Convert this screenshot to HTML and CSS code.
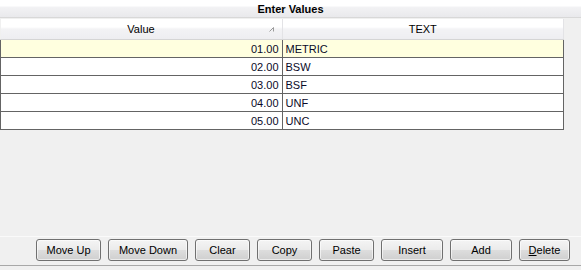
FILE: index.html
```html
<!DOCTYPE html>
<html lang="en">
<head>
    <meta charset="UTF-8">
    <title>Enter Values</title>
    <link rel="stylesheet" href="styles.css">
</head>
<body>
    <div class="window">
        <div class="title">Enter Values</div>

        <div class="grid-area">
            <table class="grid">
                <thead>
                    <tr>
                        <th class="col-value">Value
                            <svg class="sort" width="6" height="5" viewBox="0 0 6 5">
                                <path d="M0.5 4.5 L4.5 0.5 L4.5 4.5" fill="none" stroke="#9a9a9a" stroke-width="1"/>
                            </svg>
                        </th>
                        <th class="col-text">TEXT</th>
                    </tr>
                </thead>
                <tbody>
                    <tr class="selected"><td class="num">01.00</td><td>METRIC</td></tr>
                    <tr><td class="num">02.00</td><td>BSW</td></tr>
                    <tr><td class="num">03.00</td><td>BSF</td></tr>
                    <tr><td class="num">04.00</td><td>UNF</td></tr>
                    <tr><td class="num">05.00</td><td>UNC</td></tr>
                </tbody>
            </table>
        </div>

        <div class="buttons">
            <button class="btn btn-move-up">Move Up</button>
            <button class="btn btn-move-down">Move Down</button>
            <button class="btn btn-clear">Clear</button>
            <button class="btn btn-copy">Copy</button>
            <button class="btn btn-paste">Paste</button>
            <button class="btn btn-insert">Insert</button>
            <button class="btn btn-add">Add</button>
            <button class="btn btn-delete"><u>D</u>elete</button>
        </div>
    </div>
</body>
</html>
```

FILE: styles.css
```css
body {
    margin: 0;
    padding: 0;
    background-color: #f0f0f0;
    font-family: "Liberation Sans", Arial, sans-serif;
    font-size: 11px;
    color: #000;
}
.window {
    width: 581px;
    height: 270px;
    display: flex;
    flex-direction: column;
}
.title {
    height: 17px;
    line-height: 18px;
    text-align: center;
    font-weight: bold;
    border-bottom: 1px solid #d8d8d8;
    background: linear-gradient(#ffffff 0%, #ffffff 35%, #f2f2f4 42%, #e9e9ec 100%);
}
.grid-area {
    flex: 1;
    padding-top: 1px;
}
.grid {
    width: 564px;
    border-collapse: collapse;
    table-layout: fixed;
}
.grid th {
    height: 20px;
    padding: 0;
    font-weight: normal;
    text-align: center;
    position: relative;
    border-right: 1px solid #e3e3e6;
    border-bottom: 1px solid #d5d5d5;
    background: linear-gradient(#ffffff 0%, #ffffff 40%, #f3f3f5 50%, #eeeef1 100%);
}
.grid th.col-value {
    width: 281px;
}
.sort {
    position: absolute;
    right: 7px;
    top: 8px;
}
.grid td {
    height: 17px;
    padding: 0 3px;
    border: 1px solid #646464;
    background-color: #fff;
    color: #0a0a28;
}
.grid td.num {
    text-align: right;
}
.grid tr.selected td {
    background-color: #ffffdf;
}
.buttons {
    height: 26px;
    display: flex;
    justify-content: flex-end;
    align-items: flex-start;
    gap: 7px;
    padding: 2px 11px 0 0;
    border-top: 1px solid #fafafa;
    border-bottom: 1px solid #a8a8a8;
    margin-bottom: 4px;
}
.btn {
    height: 22px;
    padding: 0;
    font-family: inherit;
    font-size: 11px;
    color: #000;
    border: 1px solid #707070;
    border-radius: 3px;
    background: linear-gradient(#f4f4f4 0%, #ebebeb 48%, #dddddd 52%, #cfcfcf 100%);
    box-shadow: inset 0 0 0 1px rgba(255, 255, 255, 0.6);
}
.btn-move-up { width: 65px; }
.btn-move-down { width: 80px; }
.btn-clear { width: 55px; }
.btn-copy { width: 55px; }
.btn-paste { width: 55px; }
.btn-insert { width: 62px; }
.btn-add { width: 62px; }
.btn-delete { width: 51px; }
```
